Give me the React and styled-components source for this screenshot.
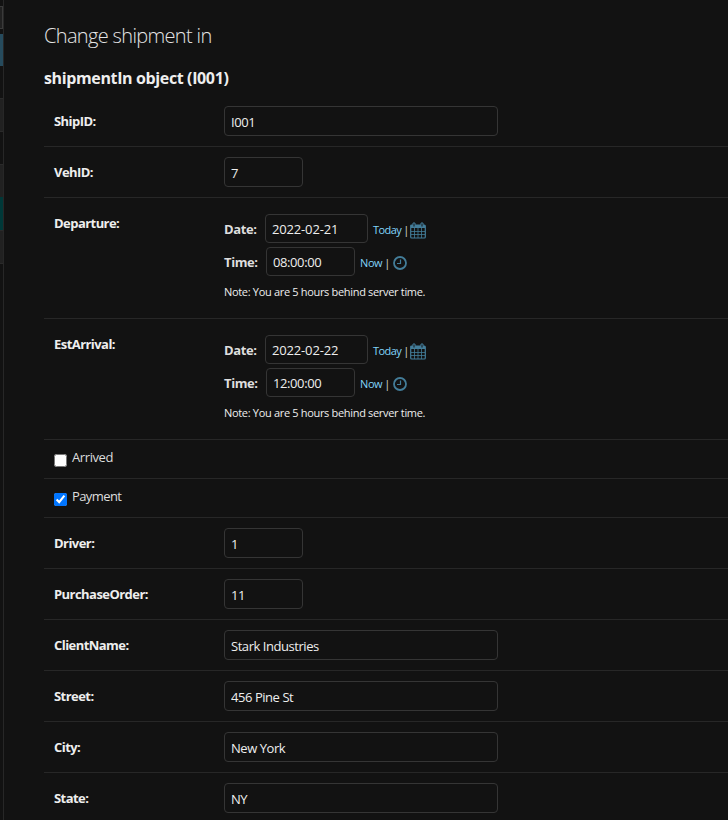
import React from "react";
import styled, { createGlobalStyle } from "styled-components";

const Global = createGlobalStyle`
  * { box-sizing: border-box; }
  body {
    margin: 0;
    background: #121212;
    color: #eeeeee;
    font-family: "Open Sans", "Noto Sans", sans-serif;
    font-size: 13px;
    overflow: hidden;
  }
`;

const Page = styled.div`
  display: flex;
  height: 820px;
  overflow: hidden;
`;

const Sidebar = styled.aside`
  display: flex;
  flex-direction: column;
  flex: none;
  width: 4px;
  border-right: 1px solid #272727;
  padding-top: 6px;
`;

const FilterEdge = styled.div`
  height: 23px;
  margin-bottom: 5px;
  background: #212121;
  border: 1px solid #3a3a3a;
  border-left: 0;
`;

const SidebarBlock = styled.div`
  flex: none;
  height: ${(p) => p.$h}px;
  background: ${(p) => p.$color || "transparent"};
  border-top: ${(p) => (p.$line ? "1px solid #2a2a2a" : "0")};
`;

const Content = styled.main`
  flex: 1;
  padding-left: 40px;
`;

const Title = styled.h1`
  margin: 0;
  padding-top: 23px;
  height: 66px;
  font-size: 20px;
  line-height: 26px;
  font-weight: 300;
  color: #e4e4e4;
  letter-spacing: -0.66px;
  white-space: nowrap;
`;

const Subtitle = styled.h2`
  margin: 0;
  height: 30px;
  font-size: 16px;
  line-height: 25px;
  font-weight: 700;
  letter-spacing: -0.37px;
  white-space: nowrap;
`;

const Row = styled.div`
  display: flex;
  height: ${(p) => p.$h || 51}px;
  padding: 10px;
  border-bottom: 1px solid #272727;
`;

const Label = styled.label`
  width: 170px;
  flex: none;
  font-weight: 700;
  line-height: 31px;
  height: 30px;
  letter-spacing: -0.55px;
`;

const Input = styled.input`
  width: ${(p) => p.$w}px;
  height: ${(p) => p.$h || 30}px;
  margin: 0;
  padding: 1px 6px 0;
  border: 1px solid #353535;
  border-radius: 4px;
  background: #121212;
  color: #eeeeee;
  font: inherit;
  letter-spacing: ${(p) => p.$ls || 0}px;
  outline: none;
`;

const DateTime = styled.div`
  display: flex;
  flex-direction: column;
  padding-top: 6px;
`;

const TimeLine = styled.div`
  display: flex;
  align-items: center;
  height: 29px;
  margin-bottom: 4px;
`;

const PartLabel = styled.span`
  width: ${(p) => p.$w}px;
  font-weight: 700;
  color: #dedede;
  padding-top: 1px;
  letter-spacing: -0.4px;
`;

const Shortcuts = styled.span`
  display: flex;
  align-items: center;
  gap: 2px;
  margin-left: 5px;
  padding-top: 2px;
  font-size: 11px;
  letter-spacing: ${(p) => p.$ls}px;

  svg {
    margin-top: 1px;
    margin-left: ${(p) => p.$gap || 0}px;
  }
`;

const Link = styled.a`
  color: #81d4fa;
`;

const Separator = styled.span`
  color: #dddddd;
`;

const Note = styled.div`
  margin-top: 4px;
  font-size: 11px;
  line-height: 16px;
  letter-spacing: -0.32px;
  white-space: nowrap;
`;

const Check = styled.input`
  width: 13px;
  height: 13px;
  margin: 4px 5px 0 0;
  accent-color: #0075ff;
`;

const CheckLabel = styled.label`
  line-height: 15px;
  color: #dddddd;
  letter-spacing: ${(p) => p.$ls}px;
`;

const CalendarIcon = () => (
  <svg width="16" height="17" viewBox="0 0 16 17" fill="none" stroke="#437d99">
    <path d="M.7 4.5V15q0 1 1 1h12.6q1 0 1-1V4q0-1-1-1H1.7q-1 0-1 1z" strokeWidth="1.2" />
    <path d="M1 4.5h14" strokeWidth="3" />
    <path d="M3 1h2v4H3zM11 1h2v4h-2z" fill="#121212" />
    <path d="M4.5 6v10M8 6v10M11.5 6v10M1 9.5h14M1 12.5h14" strokeWidth=".8" />
  </svg>
);

const ClockIcon = () => (
  <svg width="14" height="14" viewBox="0 0 14 14" fill="none" stroke="#437d99">
    <circle cx="7" cy="7" r="6" strokeWidth="1.8" />
    <path d="M7.5 3.5v4H4" strokeWidth="1.2" />
  </svg>
);

const Field = ({ label, value, short }) => (
  <Row>
    <Label>{label}:</Label>
    <Input defaultValue={value} $w={short ? 79 : 274} $ls={-0.45} />
  </Row>
);

const DateTimeField = ({ label, date, time }) => (
  <Row $h={121}>
    <Label>{label}:</Label>
    <DateTime>
      <TimeLine>
        <PartLabel $w={41}>Date:</PartLabel>
        <Input defaultValue={date} $w={103} $h={29} $ls={-0.16} />
        <Shortcuts $ls={-0.55} $gap={-1}>
          <Link>Today</Link>
          <Separator>|</Separator>
          <CalendarIcon />
        </Shortcuts>
      </TimeLine>
      <TimeLine>
        <PartLabel $w={42}>Time:</PartLabel>
        <Input defaultValue={time} $w={89} $h={29} $ls={-0.4} />
        <Shortcuts $ls={-0.4} $gap={1}>
          <Link>Now</Link>
          <Separator>|</Separator>
          <ClockIcon />
        </Shortcuts>
      </TimeLine>
      <Note>Note: You are 5 hours behind server time.</Note>
    </DateTime>
  </Row>
);

const CheckField = ({ label, checked }) => (
  <Row $h={39}>
    <Check type="checkbox" defaultChecked={checked} />
    <CheckLabel $ls={checked ? -0.6 : -0.4}>{label}</CheckLabel>
  </Row>
);

export default function App() {
  return (
    <>
      <Global />
      <Page>
        <Sidebar>
          <FilterEdge />
          <SidebarBlock $h={32} $color="#264b5d" />
          <SidebarBlock $h={32} />
          <SidebarBlock $h={33} $color="#212121" $line />
          <SidebarBlock $h={33} $line />
          <SidebarBlock $h={33} $color="#212121" $line />
          <SidebarBlock $h={33} $color="#003838" />
          <SidebarBlock $h={33} $color="#212121" $line />
          <SidebarBlock $h={33} $line />
        </Sidebar>
        <Content>
          <Title>Change shipment in</Title>
          <Subtitle>shipmentIn object (I001)</Subtitle>
          <Field label="ShipID" value="I001" />
          <Field label="VehID" value="7" short />
          <DateTimeField label="Departure" date="2022-02-21" time="08:00:00" />
          <DateTimeField label="EstArrival" date="2022-02-22" time="12:00:00" />
          <CheckField label="Arrived" />
          <CheckField label="Payment" checked />
          <Field label="Driver" value="1" short />
          <Field label="PurchaseOrder" value="11" short />
          <Field label="ClientName" value="Stark Industries" />
          <Field label="Street" value="456 Pine St" />
          <Field label="City" value="New York" />
          <Field label="State" value="NY" />
        </Content>
      </Page>
    </>
  );
}
